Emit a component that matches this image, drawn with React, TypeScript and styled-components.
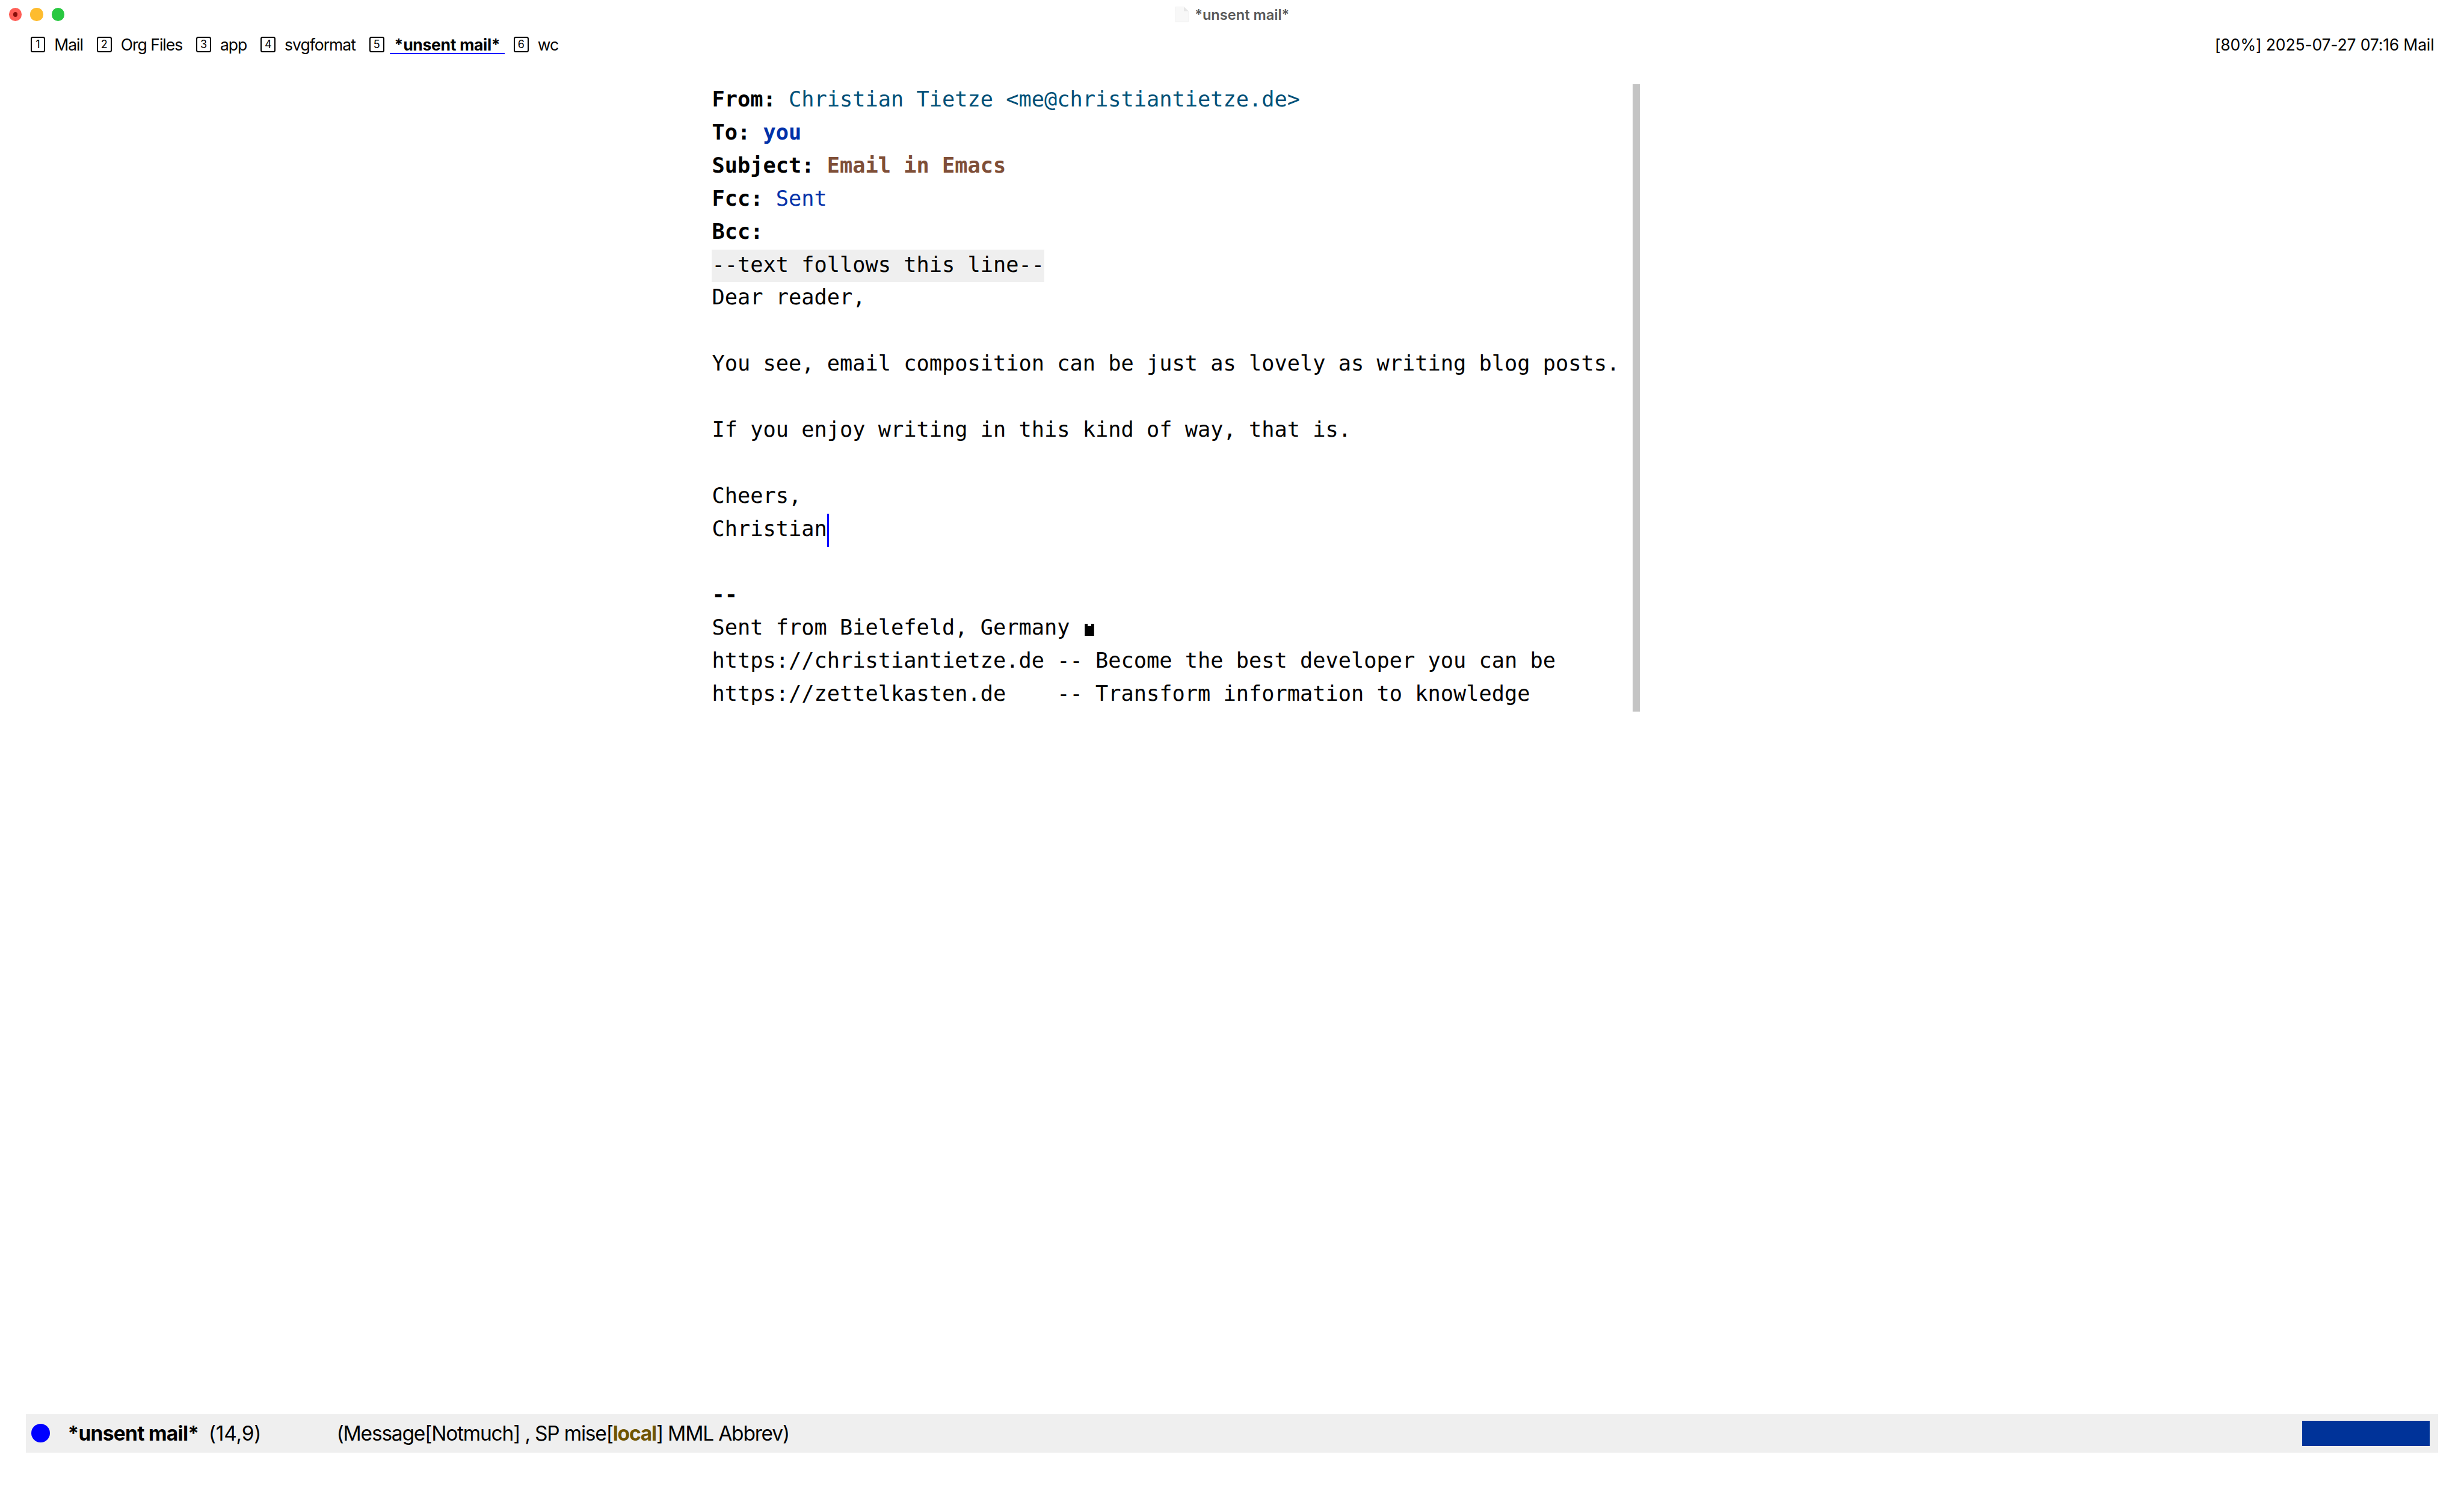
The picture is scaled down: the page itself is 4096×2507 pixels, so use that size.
import React from "react";
import styled, { createGlobalStyle } from "styled-components";

const Global = createGlobalStyle`
  html, body { margin: 0; padding: 0; background: #fff; }
  #root { width: 4096px; height: 2507px; overflow: hidden; }
`;

const Page = styled.div`
  width: 4096px;
  height: 2507px;
  box-sizing: border-box;
  padding-bottom: 92.2px;
  display: flex;
  flex-direction: column;
  background: #fff;
  color: #000;
  font-family: Inter, "Liberation Sans", sans-serif;
`;

const TitleBar = styled.div`
  height: 48px;
  flex: none;
  display: grid;
  grid-template-columns: 1fr auto 1fr;
  align-items: center;
  padding: 0 15px;
`;

const Lights = styled.div`
  display: flex;
  gap: 14.2px;
`;

const Light = styled.span<{ $color: string; $dot?: boolean }>`
  width: 21.2px;
  height: 21.2px;
  border-radius: 50%;
  background: ${(p) => p.$color};
  display: flex;
  align-items: center;
  justify-content: center;
  &::after {
    content: "";
    width: 7.5px;
    height: 7.5px;
    border-radius: 50%;
    background: ${(p) => (p.$dot ? "#8a0f0a" : "transparent")};
  }
`;

const Title = styled.div`
  display: flex;
  align-items: center;
  gap: 10.5px;
  font-size: 23.6px;
  font-weight: 600;
  color: #595959;
`;

const TabRow = styled.div`
  height: 51.4px;
  flex: none;
  display: flex;
  align-items: center;
  justify-content: space-between;
  padding: 0 49.6px 0 50.5px;
  font-size: 26.5px;
`;

const Tabs = styled.div`
  display: flex;
  align-items: center;
  gap: 23px;
`;

const Tab = styled.div<{ $active?: boolean }>`
  display: flex;
  align-items: center;
  gap: ${(p) => (p.$active ? "9.5px" : "15px")};
  margin-right: ${(p) => (p.$active ? "-8px" : "0")};
`;

const KeyBox = styled.span`
  width: 24.8px;
  height: 25.7px;
  box-sizing: border-box;
  border: 2.1px solid #000;
  border-bottom-width: 2.8px;
  border-radius: 3.5px;
  display: flex;
  align-items: center;
  justify-content: center;
  font-size: 18px;
  font-weight: 400;
  line-height: 1;
`;

const TabName = styled.span<{ $active?: boolean }>`
  line-height: 28px;
  letter-spacing: ${(p) => (p.$active ? "-0.3px" : "-1px")};
  white-space: pre;
  font-weight: ${(p) => (p.$active ? 700 : 400)};
  padding: ${(p) => (p.$active ? "0 7.5px" : "0")};
  border-top: 2.6px solid transparent;
  border-bottom: 2.6px solid ${(p) => (p.$active ? "#0000ff" : "transparent")};
`;

const Clock = styled.span`
  line-height: 30px;
  white-space: pre;
  letter-spacing: -0.15px;
`;

const Editor = styled.div`
  display: flex;
  flex: none;
  margin: 40.6px 0 0 1183.4px;
  width: 1543px;
`;

const Buffer = styled.div`
  flex: none;
  width: 1530.6px;
  font-family: "DejaVu Sans Mono", "Liberation Mono", monospace;
  font-size: 35.3px;
`;

const Line = styled.div`
  height: 54.92px;
  line-height: 49px;
  white-space: pre;
`;

const Label = styled.span`
  font-weight: 700;
`;

const Value = styled.span<{ $color: string; $bold?: boolean }>`
  color: ${(p) => p.$color};
  font-weight: ${(p) => (p.$bold ? 700 : 400)};
`;

const Separator = styled.span`
  display: inline-block;
  height: 54.92px;
  background: #efefef;
`;

const Cursor = styled.span`
  display: inline-block;
  width: 3.6px;
  height: 54.92px;
  background: #0000ff;
  vertical-align: top;
`;

const Glyph = styled.svg`
  display: inline-block;
  width: 16px;
  height: 20.4px;
  margin-left: 2.9px;
  vertical-align: -1.5px;
`;

const Scrollbar = styled.div`
  flex: none;
  width: 12.4px;
  background: #c4c4c4;
`;

const ModeLine = styled.div`
  margin: auto 42.7px 0 42.5px;
  height: 63.8px;
  flex: none;
  display: flex;
  align-items: center;
  background: #efefef;
  padding: 0 14.2px 0 9.7px;
  font-size: 33.5px;
  white-space: pre;
`;

const StatusDot = styled.span`
  flex: none;
  width: 31px;
  height: 31px;
  border-radius: 50%;
  background: #0000ff;
  margin-right: 29.2px;
`;

const BufferName = styled.span`
  font-weight: 700;
  letter-spacing: -0.7px;
  margin-right: 16.4px;
`;

const Position = styled.span`
  width: 212.7px;
  flex: none;
  letter-spacing: -0.2px;
`;

const Modes = styled.span`
  flex: 1;
  letter-spacing: -1.2px;
`;

const Local = styled.span`
  color: #6f5500;
  font-weight: 700;
`;

const Bar = styled.span`
  flex: none;
  width: 212.6px;
  height: 42.5px;
  background: #003399;
`;

const tabs = [
  { n: 1, name: "Mail" },
  { n: 2, name: "Org Files" },
  { n: 3, name: "app" },
  { n: 4, name: "svgformat" },
  { n: 5, name: "*unsent mail*", active: true },
  { n: 6, name: "wc" },
];

const FileIcon = () => (
  <svg width="23" height="25.7" viewBox="0 0 26 29">
    <path d="M1 0.5H17L25.5 8.5V28.5H1Z" fill="#f8f8f8" stroke="#eeeeee" strokeWidth="0.8" />
    <path d="M17 0.5V8.5H25.5Z" fill="#e6e6e6" />
  </svg>
);

export default function App() {
  return (
    <Page>
      <Global />
      <TitleBar>
        <Lights>
          <Light $color="#ff5f57" $dot />
          <Light $color="#febc2e" />
          <Light $color="#28c840" />
        </Lights>
        <Title>
          <FileIcon />
          *unsent mail*
        </Title>
      </TitleBar>
      <TabRow>
        <Tabs>
          {tabs.map((t) => (
            <Tab key={t.n} $active={t.active}>
              <KeyBox>{t.n}</KeyBox>
              <TabName $active={t.active}>{t.name}</TabName>
            </Tab>
          ))}
        </Tabs>
        <Clock>[80%] 2025-07-27 07:16 Mail</Clock>
      </TabRow>
      <Editor>
        <Buffer>
          <Line><Label>From:</Label> <Value $color="#005077">Christian Tietze &lt;me@christiantietze.de&gt;</Value></Line>
          <Line><Label>To:</Label> <Value $color="#0031a9" $bold>you</Value></Line>
          <Line><Label>Subject:</Label> <Value $color="#7f4f38" $bold>Email in Emacs</Value></Line>
          <Line><Label>Fcc:</Label> <Value $color="#0031a9">Sent</Value></Line>
          <Line><Label>Bcc:</Label></Line>
          <Line><Separator>--text follows this line--</Separator></Line>
          <Line>Dear reader,</Line>
          <Line> </Line>
          <Line>You see, email composition can be just as lovely as writing blog posts.</Line>
          <Line> </Line>
          <Line>If you enjoy writing in this kind of way, that is.</Line>
          <Line> </Line>
          <Line>Cheers,</Line>
          <Line>Christian<Cursor /></Line>
          <Line> </Line>
          <Line><Label>--</Label></Line>
          <Line>Sent from Bielefeld, Germany <Glyph viewBox="0 0 16 21"><path d="M0 0H5V4H11V0H16V21H0Z" fill="#000" /></Glyph></Line>
          <Line>https://christiantietze.de -- Become the best developer you can be</Line>
          <Line>https://zettelkasten.de    -- Transform information to knowledge</Line>
        </Buffer>
        <Scrollbar />
      </Editor>
      <ModeLine>
        <StatusDot />
        <BufferName>*unsent mail*</BufferName>
        <Position>(14,9)</Position>
        <Modes>(Message[Notmuch] , SP mise[<Local>local</Local>] MML Abbrev)</Modes>
        <Bar />
      </ModeLine>
    </Page>
  );
}
